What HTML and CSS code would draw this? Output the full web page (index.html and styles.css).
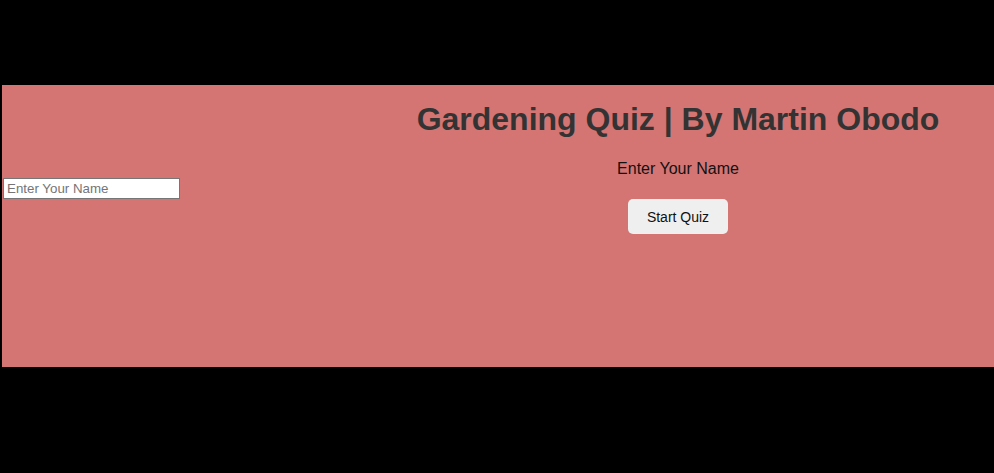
FILE: index.html
```html
<!DOCTYPE html>
<html>
<head>
<meta charset="utf-8">
<link rel="stylesheet" href="styles.css">
</head>
<body>
<div class="top-space"></div>
<main class="panel">
  <input class="name-input" type="text" placeholder="Enter Your Name">
  <section class="content">
    <h1 class="title">Gardening Quiz | By Martin Obodo</h1>
    <p class="label">Enter Your Name</p>
    <button class="start-btn">Start Quiz</button>
  </section>
</main>
</body>
</html>
```

FILE: styles.css
```css
html, body {
  margin: 0;
  padding: 0;
  background: #000;
  font-family: "Liberation Sans", Arial, sans-serif;
}
.top-space {
  height: 85px;
}
.panel {
  margin-left: 2px;
  height: 282px;
  background: #d47574;
  display: flex;
  align-items: flex-start;
}
.name-input {
  margin: 93px 0 0 1px;
  width: 177px;
  height: 21px;
  box-sizing: border-box;
  border: 1px solid #767676;
  padding: 1px 3px;
  font-family: "Liberation Sans", Arial, sans-serif;
  font-size: 13.33px;
  background: #fff;
  color: #000;
}
.name-input::placeholder {
  color: #757575;
}
.content {
  flex: 1;
  padding-left: 182px;
  display: flex;
  flex-direction: column;
  align-items: center;
}
.title {
  margin: 16px 0 0;
  font-size: 32px;
  font-weight: bold;
  color: #333;
  line-height: 37px;
  white-space: nowrap;
}
.label {
  margin: 22px 0 0;
  font-size: 16px;
  line-height: 18px;
  color: #111;
}
.start-btn {
  margin-top: 21px;
  width: 100px;
  height: 35px;
  border: none;
  border-radius: 5px;
  background: #efefef;
  font-family: "Liberation Sans", Arial, sans-serif;
  font-size: 14px;
  color: #111;
  cursor: pointer;
}
```
